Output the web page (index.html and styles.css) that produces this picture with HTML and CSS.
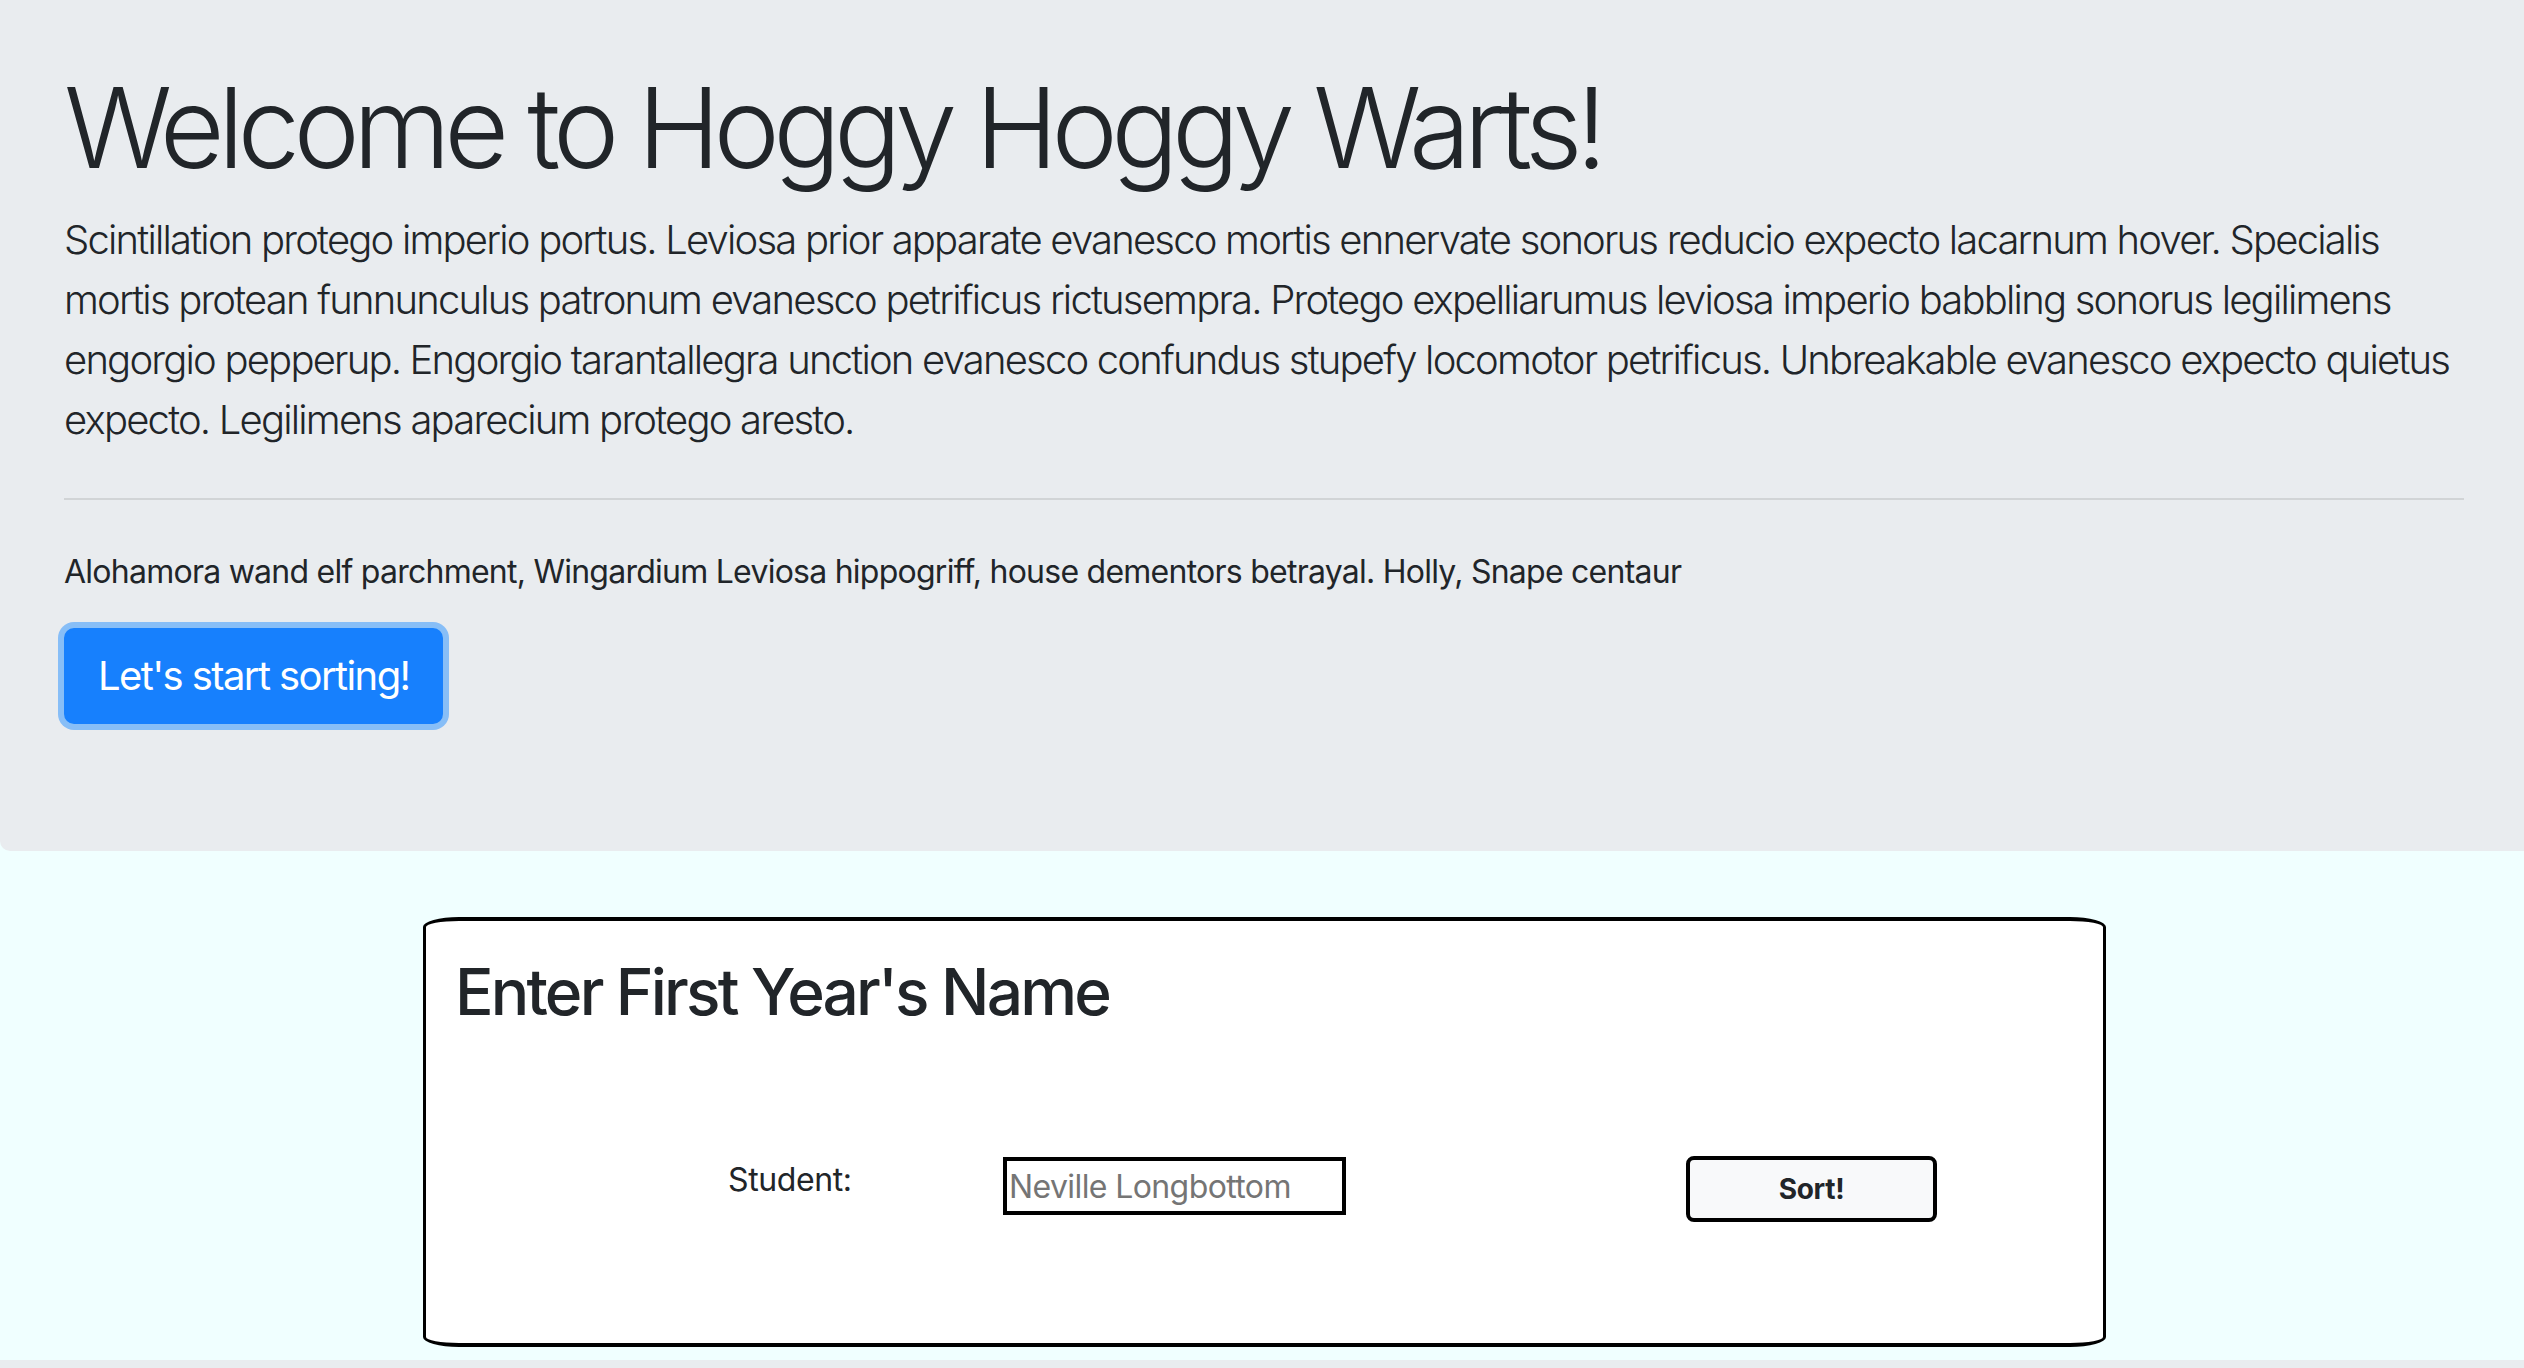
FILE: index.html
```html
<!DOCTYPE html>
<html lang="en">
<head>
<meta charset="utf-8">
<title>Hoggy Hoggy Warts</title>
<link rel="stylesheet" href="styles.css">
</head>
<body>
  <div class="jumbotron">
    <h1 class="display">Welcome to Hoggy Hoggy Warts!</h1>
    <p class="lead">Scintillation protego imperio portus. Leviosa prior apparate evanesco mortis ennervate sonorus reducio expecto lacarnum hover. Specialis mortis protean funnunculus patronum evanesco petrificus rictusempra. Protego expelliarumus leviosa imperio babbling sonorus legilimens engorgio pepperup. Engorgio tarantallegra unction evanesco confundus stupefy locomotor petrificus. Unbreakable evanesco expecto quietus expecto. Legilimens aparecium protego aresto.</p>
    <hr class="divider">
    <p class="intro">Alohamora wand elf parchment, Wingardium Leviosa hippogriff, house dementors betrayal. Holly, Snape centaur</p>
    <a class="btn-primary" href="#">Let's start sorting!</a>
  </div>

  <div class="sort-card">
    <h2 class="card-title">Enter First Year's Name</h2>
    <div class="form-row">
      <label class="student-label" for="student">Student:</label>
      <input class="student-input" id="student" type="text" placeholder="Neville Longbottom">
      <button class="sort-btn" type="button">Sort!</button>
    </div>
  </div>

  <div class="footer-band"></div>
</body>
</html>
```

FILE: styles.css
```css
* {
  box-sizing: border-box;
}

html, body {
  margin: 0;
  padding: 0;
}

body {
  background: #f0ffff;
  color: #212529;
  font-family: Inter, "Noto Sans", Roboto, "Liberation Sans", sans-serif;
  font-size: 32px;
  line-height: 1.5;
  overflow: hidden;
}

.jumbotron {
  background: #e9ecef;
  padding: 60px 60px 127px 64px;
  border-radius: 0 0 0 10px;
  margin-bottom: 66px;
}

.display {
  margin: 0 0 16px 0;
  font-size: 112px;
  font-weight: 300;
  line-height: 1.2;
  letter-spacing: -6.7px;
}

.lead {
  margin: 0 0 48px 0;
  font-size: 40px;
  font-weight: 300;
  line-height: 60px;
  letter-spacing: -1.8px;
}

.divider {
  margin: 0 0 48px 0;
  border: 0;
  border-top: 2px solid rgba(0, 0, 0, 0.1);
  height: 0;
}

.intro {
  margin: 0 0 32px 0;
  font-size: 32px;
  line-height: 48px;
  letter-spacing: -0.75px;
}

.btn-primary {
  display: inline-block;
  height: 96px;
  padding: 16px 32px;
  font-size: 40px;
  line-height: 60px;
  letter-spacing: -1.6px;
  color: #fff;
  background: #1780fd;
  border: 2px solid #1780fd;
  border-radius: 10px;
  text-decoration: none;
  box-shadow: 0 0 0 6px rgba(38, 143, 255, 0.5);
  vertical-align: top;
}

.sort-card {
  width: 1683px;
  margin-left: 423px;
  background: #fff;
  border: 4px solid #000;
  border-left-width: 3px;
  border-right-width: 3px;
  border-radius: 36px / 10px;
  padding: 33px 29px 0 29px;
  height: 430px;
}

.card-title {
  margin: 0;
  font-size: 64px;
  font-weight: 500;
  line-height: 1.2;
  letter-spacing: -2.8px;
}

.form-row {
  display: flex;
  align-items: flex-start;
  margin-top: 125px;
  padding-left: 273px;
}

.student-label {
  font-size: 32px;
  line-height: 48px;
  letter-spacing: -0.4px;
  width: 275px;
}

.student-input {
  margin-top: 1px;
  width: 343px;
  height: 58px;
  border: 4px solid #000;
  padding: 0 2px;
  font-family: Inter, "Noto Sans", Roboto, "Liberation Sans", sans-serif;
  font-size: 32px;
  letter-spacing: -0.6px;
  background: #fff;
  outline: none;
}

.student-input::placeholder {
  color: #757575;
}

.sort-btn {
  margin-left: 340px;
  width: 251px;
  height: 66px;
  border: 4px solid #000;
  border-radius: 8px;
  background: #f8f9fa;
  color: #212529;
  font-family: Inter, "Noto Sans", Roboto, "Liberation Sans", sans-serif;
  font-size: 28px;
  font-weight: 700;
  letter-spacing: -0.3px;
}

.footer-band {
  margin-top: 13px;
  height: 40px;
  background: #e9ecef;
}
```
